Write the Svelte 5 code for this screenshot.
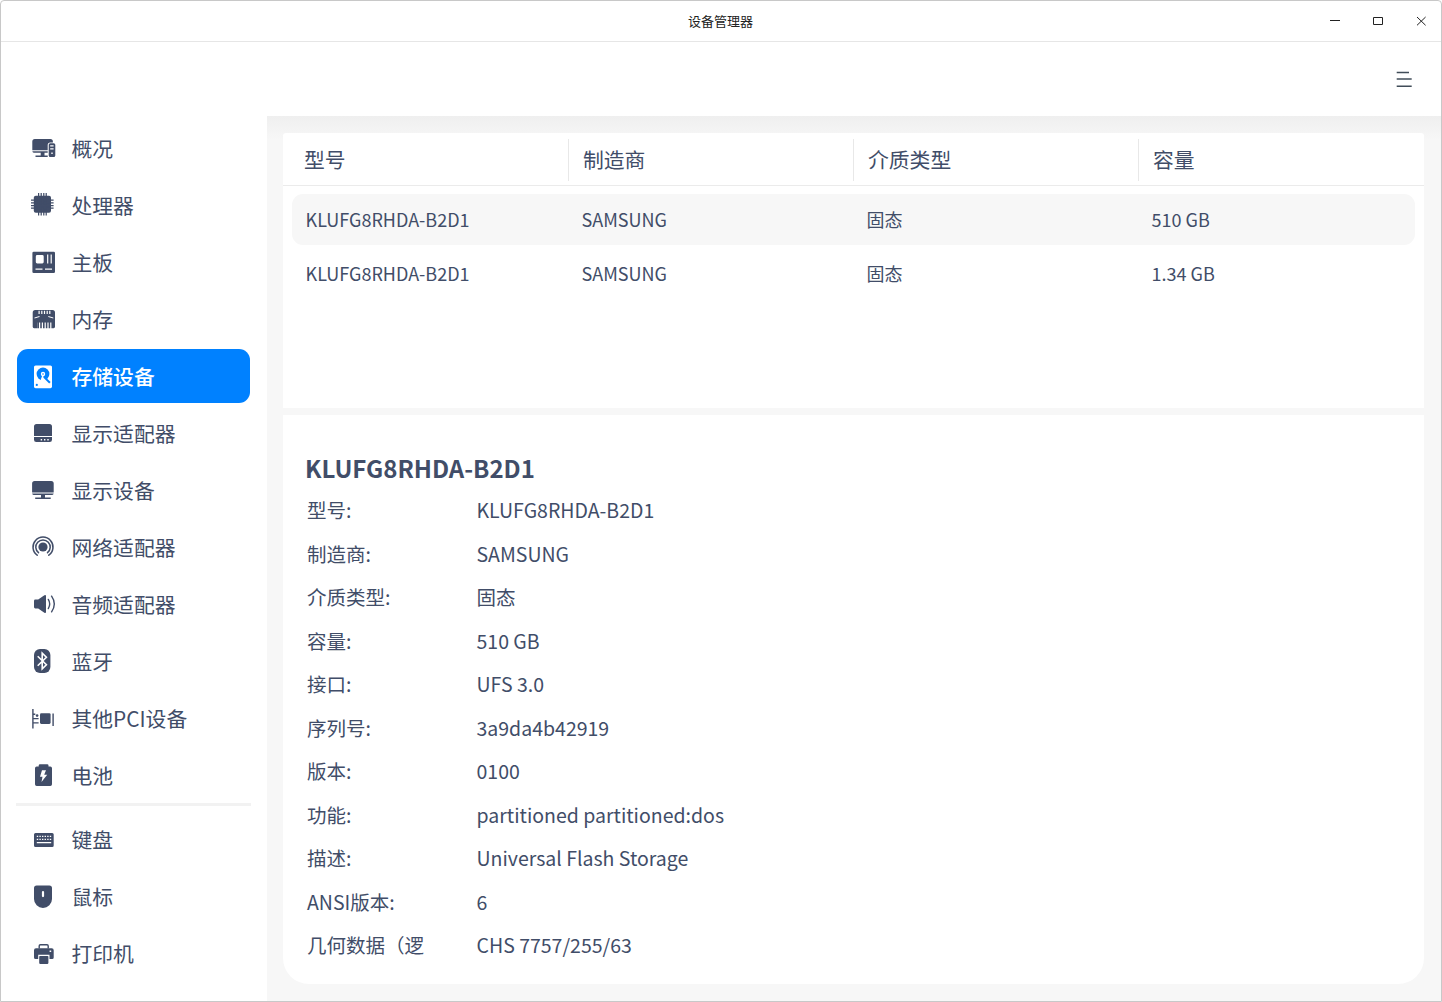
<script>
  const devices = [
    { id: 'overview', label: '概况' },
    { id: 'cpu', label: '处理器' },
    { id: 'board', label: '主板' },
    { id: 'memory', label: '内存' },
    { id: 'storage', label: '存储设备' },
    { id: 'gpu', label: '显示适配器' },
    { id: 'monitor', label: '显示设备' },
    { id: 'network', label: '网络适配器' },
    { id: 'audio', label: '音频适配器' },
    { id: 'bluetooth', label: '蓝牙' },
    { id: 'pci', label: '其他PCI设备' },
    { id: 'battery', label: '电池' }
  ];
  const peripherals = [
    { id: 'keyboard', label: '键盘' },
    { id: 'mouse', label: '鼠标' },
    { id: 'printer', label: '打印机' }
  ];
  let active = $state('storage');

  const columns = ['型号', '制造商', '介质类型', '容量'];
  const rows = [
    ['KLUFG8RHDA-B2D1', 'SAMSUNG', '固态', '510 GB'],
    ['KLUFG8RHDA-B2D1', 'SAMSUNG', '固态', '1.34 GB']
  ];
  let selectedRow = $state(0);

  const details = [
    ['型号:', 'KLUFG8RHDA-B2D1'],
    ['制造商:', 'SAMSUNG'],
    ['介质类型:', '固态'],
    ['容量:', '510 GB'],
    ['接口:', 'UFS 3.0'],
    ['序列号:', '3a9da4b42919'],
    ['版本:', '0100'],
    ['功能:', 'partitioned partitioned:dos'],
    ['描述:', 'Universal Flash Storage'],
    ['ANSI版本:', '6'],
    ['几何数据（逻', 'CHS 7757/255/63']
  ];
</script>

{#snippet icon(id)}
  <svg class="icon" viewBox="0 0 28 28" width="28" height="28" fill="currentColor" aria-hidden="true">
    {#if id === 'overview'}
      <path d="M5.8 5h15.6a2.5 2.5 0 0 1 2.5 2.5v.9h-2.700a2.500 2.500 0 0 0-2.500 2.500V16.300H3.300V7.500A2.500 2.500 0 0 1 5.800 5z" />
      <path d="M3.300 17.200h15.400v1.500H5.300a2 2 0 0 1-2-1.500zM11.700 18.500h3.800v3.200h-3.800zM6.500 21.500h12.200v1.400H6.500z" />
      <path fill-rule="evenodd" d="M21.300 9.200h3.400a1.600 1.600 0 0 1 1.600 1.600v10.700a1.600 1.600 0 0 1-1.600 1.600h-3.400a1.600 1.600 0 0 1-1.600-1.600V10.800a1.600 1.600 0 0 1 1.600-1.600zM21.200 11.300v1.200h3.400v-1.200zM21.200 14.300v1.200h3.400v-1.200zM22.300 18.600v1.400h1.400v-1.400z" />
    {:else if id === 'cpu'}
      <rect x="4.800" y="4.700" width="17.200" height="17" rx="2" />
      <path d="M9.600 2v22.600M12.200 2v22.600M14.800 2v22.600M17.200 2v22.600M2 9.200h22.600M2 11.900h22.600M2 14.500h22.600M2 17.100h22.600" stroke="currentColor" stroke-width="1.250" />
    {:else if id === 'board'}
      <path fill-rule="evenodd" d="M4.700 3.700h20a1.300 1.300 0 0 1 1.300 1.300v18.700a1.300 1.300 0 0 1-1.300 1.300H4.700a1.300 1.300 0 0 1-1.300-1.300V5a1.300 1.300 0 0 1 1.300-1.300zM8.200 7a1.400 1.400 0 0 0-1.400 1.400v5.600a1.400 1.400 0 0 0 1.400 1.400h5.100a1.400 1.400 0 0 0 1.400-1.400V8.400a1.400 1.400 0 0 0-1.400-1.400zM18.100 6.500v8.900h1.200V6.500zM21.600 6.500v8.900h1.200V6.500zM6.500 20.500v1.200h7v-1.200zM16 20.500v1.200h7v-1.200z" />
    {:else if id === 'memory'}
      <path fill-rule="evenodd" d="M6.200 5h17.300A2.500 2.500 0 0 1 26 7.500v14.300a1.400 1.400 0 0 1-1.400 1.400h-2.200v-5.700h-1.200v5.700h-1.600v-5.700h-1.200v5.700h-1.600v-5.700h-1.200v5.700h-1.600v-5.700h-1.200v5.700h-1.600v-5.700h-1.200v5.700h-1.600v-5.700H8.200v5.700H5.100a1.400 1.400 0 0 1-1.400-1.400V7.500A2.500 2.500 0 0 1 6.200 5zM9.500 5.800v3.200h1.200V5.800zM12.200 5.800v3.200h1.200V5.800zM14.900 5.800v3.200h1.200V5.800zM17.600 5.800v3.200h1.200V5.800zM20.200 5.800v3.200h1.200V5.800zM5.500 12.400l5-1.500v1.200l-5 1.300zM24.300 12.400l-5-1.500v1.200l5 1.300z" />
    {:else if id === 'storage'}
      <rect x="5" y="3.500" width="18" height="22.700" rx="1.600" />
      <g class="cutout">
        <circle cx="14" cy="12" r="6.400" />
        <circle cx="7.800" cy="22.900" r="1.100" />
      </g>
      <path d="M11.300 19l1.300-3.700.6-1.900 6.300 5.300 2.500 4.800-4 1z" />
      <circle cx="14" cy="12" r="2.200" />
      <circle class="cutout" cx="14" cy="12" r=".8" />
      <path class="cutout" d="M14.200 15.600l1.400-1.300 6 5.700-1.400 1.400z" />
    {:else if id === 'gpu'}
      <path d="M7.600 5h12.800A2.600 2.600 0 0 1 23 7.600v9.400H5V7.600A2.600 2.600 0 0 1 7.600 5z" />
      <path fill-rule="evenodd" d="M5 18h18v2.700a2.300 2.300 0 0 1-2.300 2.300H7.300A2.300 2.300 0 0 1 5 20.700zM11.700 20v1.400h1.400V20zM15 20v1.400h1.400V20zM18.300 20v1.400h1.400V20z" />
    {:else if id === 'monitor'}
      <path d="M5.600 5h16.600a2.500 2.500 0 0 1 2.500 2.500v9.100H3.100V7.500A2.500 2.500 0 0 1 5.600 5z" />
      <path d="M3.100 17.500h21.600a2 2 0 0 1-2 1.500H5.100a2 2 0 0 1-2-1.500zM12 19h4v2.600h5.700V23H6.200v-1.400H12z" />
    {:else if id === 'network'}
      <circle cx="14" cy="14" r="4.600" />
      <g fill="none" stroke="currentColor" stroke-width="1.500" stroke-linecap="round">
        <path d="M9.500 19.700a7.200 7.200 0 1 1 9 0" />
        <path d="M8.200 22.200a10 10 0 1 1 11.600 0" />
      </g>
    {:else if id === 'audio'}
      <path d="M5 10.900a1.300 1.300 0 0 1 1.300-1.300h2.900l6.200-4.300q1.600-.9 1.600.9v15.600q0 1.800-1.600.9l-6.200-4.300H6.300A1.300 1.300 0 0 1 5 17.100z" />
      <g fill="none" stroke="currentColor" stroke-width="1.400" stroke-linecap="round">
        <path d="M19.300 9.400q2.800 4.600 0 9.200" />
        <path d="M22.600 6.200q5.400 7.800 0 15.600" />
      </g>
    {:else if id === 'bluetooth'}
      <rect x="5" y="2" width="16.400" height="24" rx="6" />
      <path d="M8.700 9.200l8.700 8.600-4.200 4V6.200l4.200 4-8.700 8.600" fill="none" stroke="#fff" stroke-width="1.600" />
    {:else if id === 'pci'}
      <rect x="3.200" y="5" width="1.400" height="19.500" />
      <path d="M4 9.600h2.300v1.300H4zM4 13.900h5.600v1.300H4zM4 18.200h5.600v1.400H4z" />
      <circle cx="8.100" cy="11.600" r="1.300" />
      <rect x="11" y="9.200" width="10.600" height="10.700" rx="1.300" />
      <rect x="23.400" y="9.500" width="1.400" height="12.500" />
    {:else if id === 'battery'}
      <path fill-rule="evenodd" d="M11 3.300h7.200a1.300 1.300 0 0 1 1.300 1.300v1h1.800A1.700 1.700 0 0 1 23 7.300v15.900a1.700 1.700 0 0 1-1.700 1.700H7.700A1.700 1.700 0 0 1 6 23.200V7.300a1.700 1.700 0 0 1 1.700-1.700h2v-1A1.300 1.300 0 0 1 11 3.300zM13 9.200l-2 6.600h2.500l-1 5.200 5.700-7.300h-3l1.800-4.500z" />
    {:else if id === 'keyboard'}
      <path fill-rule="evenodd" d="M6.500 6.900h16.700a1.500 1.500 0 0 1 1.500 1.500v11.100a1.500 1.500 0 0 1-1.500 1.500H6.500A1.500 1.500 0 0 1 5 19.500V8.400a1.500 1.500 0 0 1 1.500-1.500zM7.800 9.700v1.400h1.400V9.700zM10.400 9.700v1.400h1.400V9.700zM13 9.700v1.400h1.400V9.700zM15.600 9.700v1.400H17V9.700zM18.200 9.700v1.400h1.400V9.700zM20.800 9.700v1.400h1.400V9.700zM7.800 12.700v1.400h1.400v-1.400zM10.400 12.700v1.400h1.400v-1.400zM13 12.700v1.400h1.400v-1.400zM15.600 12.700v1.400H17v-1.400zM18.200 12.700v1.400h1.400v-1.400zM20.800 12.700v1.400h1.400v-1.400zM7.800 15.900v1.400h14.400v-1.400z" />
    {:else if id === 'mouse'}
      <path fill-rule="evenodd" d="M7.600 2.400h12.800A2.600 2.600 0 0 1 23 5v11a9 9 0 0 1-18 0V5a2.600 2.600 0 0 1 2.600-2.600zM12.900 9.200v3.900a1.100 1.100 0 0 0 2.200 0V9.200a1.100 1.100 0 0 0-2.200 0z" />
    {:else if id === 'printer'}
      <path d="M10.200 8.400V6a1.200 1.200 0 0 1 1.200-1.200h6.600A1.200 1.200 0 0 1 19.200 6v2.400" fill="none" stroke="currentColor" stroke-width="1.400" />
      <path fill-rule="evenodd" d="M7 8.200h15.700a2 2 0 0 1 2 2v7.300a1.500 1.500 0 0 1-1.500 1.500h-2.700v-4.200H9.200V19H6.500A1.500 1.500 0 0 1 5 17.500v-7.300a2 2 0 0 1 2-2zM20.600 10.400v1.500h1.600v-1.500z" />
      <rect x="10.200" y="15.900" width="9.200" height="8" rx=".8" />
    {/if}
  </svg>
{/snippet}

{#snippet navItem(item)}
  <button class="item" class:active={active === item.id} onclick={() => (active = item.id)}>
    {@render icon(item.id)}
    <span>{item.label}</span>
  </button>
{/snippet}

<div class="window">
  <header class="titlebar">
    <span class="title">设备管理器</span>
    <div class="controls">
      <svg viewBox="0 0 12 12" width="12" height="12"><path d="M1 5.500h10" /></svg>
      <svg viewBox="0 0 12 12" width="12" height="12"><path d="M1.500 2.500h9v7h-9z" /></svg>
      <svg viewBox="0 0 12 12" width="12" height="12"><path d="M2 2l8.600 8.300M10.600 2L2 10.300" /></svg>
    </div>
  </header>
  <div class="toolbar">
    <svg class="menu" viewBox="0 0 16 16" width="16" height="16"><path d="M.7 1.500h12.300M.7 8h15M.7 15.200h15" /></svg>
  </div>
  <div class="body">
    <nav class="sidebar">
      {#each devices as item}{@render navItem(item)}{/each}
      <div class="divider"></div>
      <div class="group">
        {#each peripherals as item}{@render navItem(item)}{/each}
      </div>
    </nav>
    <main class="content">
      <section class="table">
        <div class="thead">
          {#each columns as column}<div class="th"><span>{column}</span></div>{/each}
        </div>
        <div class="tbody">
          {#each rows as row, i}
            <button class="tr" class:selected={selectedRow === i} onclick={() => (selectedRow = i)}>
              {#each row as cell}<span>{cell}</span>{/each}
            </button>
          {/each}
        </div>
      </section>
      <section class="details">
        <h2>KLUFG8RHDA-B2D1</h2>
        <dl>
          {#each details as [name, value]}
            <dt>{name}</dt>
            <dd>{value}</dd>
          {/each}
        </dl>
      </section>
    </main>
  </div>
</div>

<style>
  :global(body) {
    margin: 0;
    background: #fff;
  }
  .window {
    box-sizing: border-box;
    width: 1442px;
    height: 1002px;
    display: flex;
    flex-direction: column;
    border: 1px solid #c8c8c8;
    border-radius: 4px 4px 0 0;
    overflow: hidden;
    background: #fff;
    color: #414d68;
    font-family: 'Noto Sans CJK SC', 'Noto Sans', sans-serif;
  }
  button {
    margin: 0;
    padding: 0;
    border: 0;
    background: none;
    color: inherit;
    font: inherit;
    text-align: left;
  }
  .titlebar {
    box-sizing: border-box;
    height: 41px;
    flex: none;
    display: grid;
    grid-template-columns: 1fr auto 1fr;
    align-items: center;
    border-bottom: 1px solid #e6e6e6;
  }
  .title {
    grid-column: 2;
    color: #222;
    font-size: 13px;
    line-height: 20px;
    padding: 0 1px 1px 0;
  }
  .controls {
    display: flex;
    justify-content: flex-end;
    gap: 31px;
    padding-right: 14px;
  }
  .controls svg {
    fill: none;
    stroke: #222;
    stroke-width: 1;
  }
  .toolbar {
    height: 74px;
    flex: none;
    display: flex;
    align-items: center;
    justify-content: flex-end;
    padding-right: 29px;
  }
  .menu {
    fill: none;
    stroke: #414d59;
    stroke-width: 1.400;
  }
  .body {
    flex: 1;
    min-height: 0;
    display: flex;
  }
  .sidebar {
    box-sizing: border-box;
    width: 266px;
    padding: 5px 17px 0 16px;
    display: flex;
    flex-direction: column;
    gap: 3px;
    flex: none;
  }
  .group {
    display: flex;
    flex-direction: column;
    gap: 3px;
  }
  .item {
    height: 54px;
    flex: none;
    display: flex;
    align-items: center;
    gap: 14.500px;
    padding-left: 12px;
    border-radius: 11px;
    font-size: 20.800px;
    line-height: 30px;
  }
  .group span {
    padding-bottom: 2px;
  }
  .item.active {
    background: #0081ff;
    color: #fff;
    font-weight: 500;
  }
  .icon {
    flex: none;
  }
  .cutout {
    fill: #0081ff;
  }
  .divider {
    height: 3px;
    flex: none;
    margin: -2px -1px 4px;
    background: #f2f2f2;
  }
  .content {
    flex: 1;
    box-sizing: border-box;
    padding: 17px 17px 17px 16px;
    display: flex;
    flex-direction: column;
    gap: 7px;
    background: linear-gradient(#efefef, #f7f7f7 24px);
  }
  .table {
    height: 275px;
    flex: none;
    background: #fff;
    border-radius: 3px 3px 0 0;
  }
  .thead {
    box-sizing: border-box;
    height: 53px;
    display: grid;
    grid-template-columns: 286px 285px 285px 1fr;
    padding: 6px 0 4px;
    border-bottom: 1px solid #ebebeb;
  }
  .th {
    box-sizing: border-box;
    display: flex;
    align-items: center;
    padding: 0 0 2px 14px;
    border-right: 1px solid #e8e8e8;
    font-size: 20.800px;
    line-height: 30px;
  }
  .th:first-child {
    padding-left: 21px;
  }
  .th:last-child {
    border-right: 0;
  }
  .tbody {
    display: flex;
    flex-direction: column;
    gap: 4px;
    padding: 8px 9px;
  }
  .tr {
    box-sizing: border-box;
    height: 51px;
    display: grid;
    grid-template-columns: 276px 285px 285px 1fr;
    align-items: center;
    padding: 0 0 2px 13.500px;
    border-radius: 11px;
    font-size: 18px;
    line-height: 26px;
  }
  .tr:nth-child(2) {
    height: 50px;
  }
  .tr.selected {
    background: #f7f7f7;
  }
  .details {
    flex: 1;
    box-sizing: border-box;
    padding: 35px 22px 0;
    background: #fff;
    border-radius: 0 0 26px 26px;
  }
  h2 {
    margin: 0;
    font-size: 24px;
    line-height: 36px;
    font-weight: 700;
  }
  dl {
    margin: 2.500px 0 0 2px;
    display: grid;
    grid-template-columns: 169.500px 1fr;
    grid-auto-rows: 43.500px;
    align-items: center;
    font-size: 19.500px;
    line-height: 28px;
  }
  dt,
  dd {
    margin: 0;
    white-space: nowrap;
  }
</style>
